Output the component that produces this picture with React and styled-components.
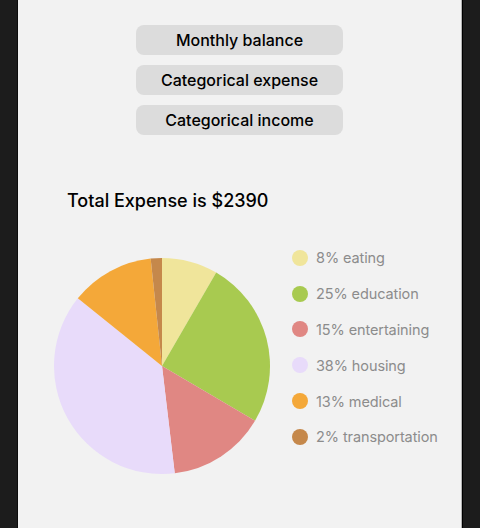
import React from "react";
import styled, { createGlobalStyle } from "styled-components";

const expenses = [
  { name: "eating", amount: 200, color: "#f0e59b" },
  { name: "education", amount: 600, color: "#a8ca50" },
  { name: "entertaining", amount: 350, color: "#e08783" },
  { name: "housing", amount: 900, color: "#e8dbfa" },
  { name: "medical", amount: 300, color: "#f4a839" },
  { name: "transportation", amount: 40, color: "#c5884b" },
];

const total = expenses.reduce((sum, e) => sum + e.amount, 0);

const GlobalStyle = createGlobalStyle`
  html, body {
    margin: 0;
    padding: 0;
    background: #1c1c1c;
  }
  body {
    font-family: Inter, "Noto Sans", "Liberation Sans", sans-serif;
    -webkit-font-smoothing: antialiased;
  }
`;

const Frame = styled.div`
  display: flex;
  min-height: 100vh;
  padding-left: 17px;
`;

const Screen = styled.main`
  width: 443px;
  min-height: 100vh;
  background: #f2f2f2;
  border-left: 1px solid #0c0c0c;
  border-right: 1px solid #b4b4b4;
  box-shadow: 1px 0 0 #000;
  display: flex;
  flex-direction: column;
`;

const Menu = styled.nav`
  display: flex;
  flex-direction: column;
  align-items: center;
  gap: 10px;
  padding-top: 25px;
`;

const MenuBtn = styled.button`
  width: 207px;
  height: 30px;
  border: none;
  border-radius: 8px;
  background: #dcdcdc;
  color: #000;
  font-family: inherit;
  font-size: 16px;
  font-weight: 500;
  padding: 0 0 1px;
  cursor: pointer;
`;

const Title = styled.h2`
  margin: 55px 0 0 49px;
  font-size: 18px;
  line-height: 22px;
  font-weight: 500;
  color: #000;
`;

const ChartRow = styled.section`
  display: flex;
  align-items: flex-start;
  margin-top: 28px;
  padding-left: 36px;
`;

const PieBox = styled.svg`
  margin-top: 18px;
  flex-shrink: 0;
`;

const Legend = styled.ul`
  list-style: none;
  margin: 0 0 0 22px;
  padding: 0;
`;

const LegendItem = styled.li`
  display: flex;
  align-items: center;
  height: 35.8px;
  gap: 8px;
  font-size: 14.5px;
  letter-spacing: -0.1px;
  color: #8c8c8c;
`;

const Dot = styled.span`
  width: 16px;
  height: 16px;
  border-radius: 50%;
  background: ${(p) => p.color};
  flex-shrink: 0;
`;

const Pie = ({ size }) => {
  const r = size / 2;
  let acc = 0;
  const point = (frac) => {
    const a = frac * Math.PI * 2 - Math.PI / 2;
    return [r + r * Math.cos(a), r + r * Math.sin(a)];
  };
  return (
    <PieBox width={size} height={size} viewBox={`0 0 ${size} ${size}`}>
      {expenses.map((e) => {
        const start = acc / total;
        acc += e.amount;
        const end = acc / total;
        const [x1, y1] = point(start);
        const [x2, y2] = point(end);
        const large = end - start > 0.5 ? 1 : 0;
        return (
          <path
            key={e.name}
            d={`M${r},${r} L${x1},${y1} A${r},${r} 0 ${large} 1 ${x2},${y2} Z`}
            fill={e.color}
          />
        );
      })}
    </PieBox>
  );
};

export default function App() {
  return (
    <>
      <GlobalStyle />
      <Frame>
        <Screen>
          <Menu>
            <MenuBtn>Monthly balance</MenuBtn>
            <MenuBtn>Categorical expense</MenuBtn>
            <MenuBtn>Categorical income</MenuBtn>
          </Menu>
          <Title>Total Expense is ${total}</Title>
          <ChartRow>
            <Pie size={216} />
            <Legend>
              {expenses.map((e) => (
                <LegendItem key={e.name}>
                  <Dot color={e.color} />
                  <span>
                    {Math.round((e.amount / total) * 100)}% {e.name}
                  </span>
                </LegendItem>
              ))}
            </Legend>
          </ChartRow>
        </Screen>
      </Frame>
    </>
  );
}
